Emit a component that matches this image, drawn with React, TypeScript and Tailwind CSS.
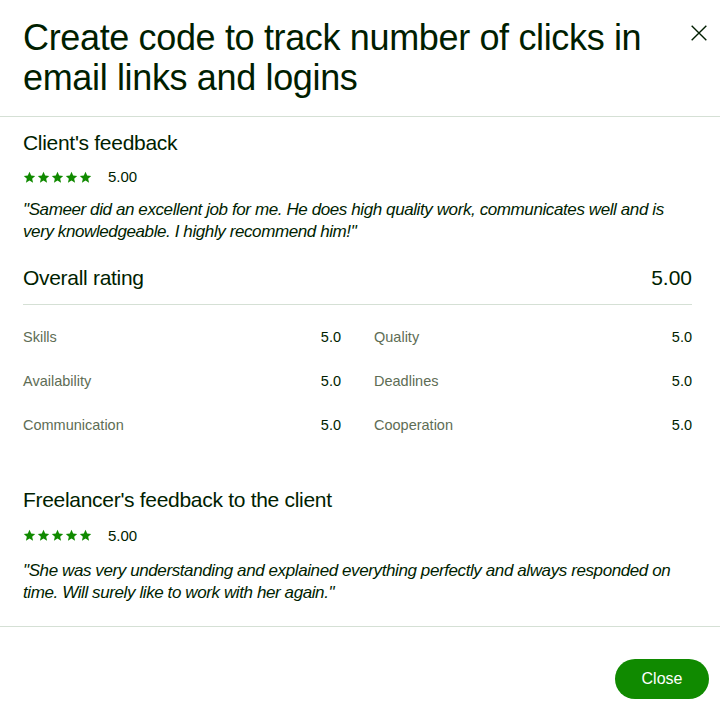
const Star = () => (
  <svg viewBox="0 0 24 24" className="w-[13px] h-[13px]" fill="#108a00">
    <path d="M12 1.5l3.1 6.9 7.4.7-5.6 5 1.7 7.4L12 17.6l-6.6 3.9 1.7-7.4-5.6-5 7.4-.7z" />
  </svg>
);

const Stars = ({ score }: { score: string }) => (
  <div className="flex items-center gap-[16px]">
    <div className="flex gap-[1px]">
      {[0, 1, 2, 3, 4].map((i) => (
        <Star key={i} />
      ))}
    </div>
    <span className="text-[15px] text-[#001e00]">{score}</span>
  </div>
);

const ratings = [
  ["Skills", "5.0", "Quality", "5.0"],
  ["Availability", "5.0", "Deadlines", "5.0"],
  ["Communication", "5.0", "Cooperation", "5.0"],
];

export default function App() {
  return (
    <div
      className="w-[720px] h-[722px] bg-white flex flex-col text-[#001e00]"
      style={{ fontFamily: '"Liberation Sans", Arial, sans-serif' }}
    >
      {/* Header */}
      <header className="flex items-start justify-between pl-[23px] pr-[4px] pt-[18px] pb-[18px] border-b border-[#d5e0d5]">
        <h1 className="text-[36px] leading-[40px] tracking-[-0.35px]">
          Create code to track number of clicks in
          <br />
          email links and logins
        </h1>
        <button className="p-[6px] -mt-[2px] text-[#001e00]">
          <svg viewBox="0 0 24 24" className="w-[22px] h-[22px]" fill="none" stroke="currentColor" strokeWidth="1.5">
            <path d="M4 4l16 16M20 4L4 20" />
          </svg>
        </button>
      </header>

      {/* Body */}
      <section className="px-[23px] pt-[14px] flex-1 flex flex-col">
        <h2 className="text-[21px] leading-[24px] tracking-[-0.3px]">Client's feedback</h2>
        <div className="mt-[11px]">
          <Stars score="5.00" />
        </div>
        <p className="mt-[10px] text-[17px] leading-[22px] italic tracking-[-0.4px]">
          "Sameer did an excellent job for me. He does high quality work, communicates well and is
          very knowledgeable. I highly recommend him!"
        </p>

        <div className="mt-[23px] flex justify-between items-center pb-[14px] border-b border-[#d5e0d5] mr-[5px]">
          <span className="text-[21px] leading-[24px] tracking-[-0.3px]">Overall rating</span>
          <span className="text-[21px] leading-[24px]">5.00</span>
        </div>

        <div className="mt-[23px] mr-[5px] grid grid-cols-2 gap-x-[33px] gap-y-[26px]">
          {ratings.map(([a, av, b, bv]) => [
            <div key={a} className="flex justify-between text-[14.5px] leading-[18px] text-[#5e6d55]">
              <span>{a}</span>
              <span className="text-[#001e00]">{av}</span>
            </div>,
            <div key={b} className="flex justify-between text-[14.5px] leading-[18px] text-[#5e6d55]">
              <span>{b}</span>
              <span className="text-[#001e00]">{bv}</span>
            </div>,
          ])}
        </div>

        <h2 className="mt-[54px] text-[21px] leading-[24px] tracking-[-0.3px]">
          Freelancer's feedback to the client
        </h2>
        <div className="mt-[13px]">
          <Stars score="5.00" />
        </div>
        <p className="mt-[13px] text-[17px] leading-[22px] italic tracking-[-0.4px]">
          "She was very understanding and explained everything perfectly and always responded on
          time. Will surely like to work with her again."
        </p>
      </section>

      {/* Footer */}
      <footer className="border-t border-[#d5e0d5] flex justify-end pr-[11px] pt-[32px] pb-[23px]">
        <button className="h-[40px] w-[94px] rounded-full bg-[#108a00] text-white text-[16px]">
          Close
        </button>
      </footer>
    </div>
  );
}
